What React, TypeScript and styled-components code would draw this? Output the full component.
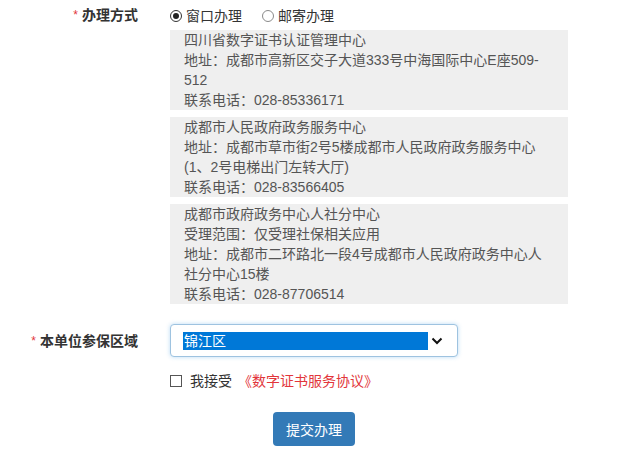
import React from "react";
import styled, { createGlobalStyle } from "styled-components";

const GlobalStyle = createGlobalStyle`
  html, body { margin: 0; padding: 0; background: #ffffff; }
  body {
    font-family: "Liberation Sans", "Noto Sans CJK SC", sans-serif;
    font-size: 14px;
    color: #333;
  }
`;

const Page = styled.div`
  width: 631px;
  height: 470px;
  padding-top: 5px;
  box-sizing: border-box;
  display: flex;
  flex-direction: column;
`;

const FormRow = styled.div<{ $mt?: number; $center?: boolean }>`
  display: grid;
  grid-template-columns: 138px 400px;
  column-gap: 32px;
  align-items: ${(p) => (p.$center ? "center" : "start")};
  margin-top: ${(p) => p.$mt ?? 0}px;
`;

const Label = styled.div`
  text-align: right;
  font-weight: bold;
  font-size: 14px;
  line-height: 20px;
  color: #333;
  white-space: nowrap;
`;

const Star = styled.span`
  color: #e2363b;
  font-weight: normal;
  font-size: 12px;
  margin-right: 4px;
  vertical-align: 1px;
`;

const Field = styled.div`
  display: flex;
  flex-direction: column;
`;

const RadioGroup = styled.div`
  display: flex;
  align-items: center;
  height: 22px;
  gap: 20px;
`;

const RadioLabel = styled.label`
  display: flex;
  align-items: center;
  gap: 3px;
  font-size: 14px;
  color: #333;
  line-height: 20px;
`;

const RadioCircle = styled.span<{ $checked?: boolean }>`
  width: 12px;
  height: 12px;
  box-sizing: border-box;
  border-radius: 50%;
  border: 1px solid ${(p) => (p.$checked ? "#333" : "#8a8a8a")};
  display: inline-flex;
  align-items: center;
  justify-content: center;
  margin-right: 1px;
  &::after {
    content: "";
    width: 6px;
    height: 6px;
    border-radius: 50%;
    background: ${(p) => (p.$checked ? "#222" : "transparent")};
  }
`;

const Offices = styled.div`
  display: flex;
  flex-direction: column;
  gap: 7px;
  margin-top: 3px;
  width: 398px;
`;

const OfficeCard = styled.div`
  background: #efefef;
  padding: 0 14px;
  color: #555;
  font-size: 14px;
  line-height: 20px;
`;

const Line = styled.div`
  white-space: nowrap;
`;

const SelectBox = styled.div`
  width: 288px;
  height: 33px;
  box-sizing: border-box;
  border: 1px solid #9ec3e0;
  border-radius: 4px;
  box-shadow: 0 0 4px rgba(102, 175, 233, 0.45);
  display: flex;
  align-items: center;
  padding: 0 14px 0 12px;
  background: #fff;
`;

const SelectedValue = styled.span`
  flex: 0 0 244px;
  height: 18px;
  line-height: 18px;
  background: #0078d7;
  color: #fff;
  font-size: 14px;
  padding-left: 1px;
`;

const Chevron = styled.svg`
  margin-left: auto;
  display: block;
`;

const AgreeRow = styled.div`
  display: flex;
  align-items: center;
  margin-top: 14px;
  margin-left: 170px;
  font-size: 14px;
  line-height: 20px;
  color: #333;
`;

const CheckBox = styled.span`
  width: 12px;
  height: 12px;
  box-sizing: border-box;
  border: 1px solid #555;
  margin-right: 8px;
  background: #fff;
`;

const AgreementLink = styled.a`
  color: #e2363b;
  text-decoration: none;
  margin-left: 6px;
`;

const ButtonWrap = styled.div`
  margin-left: 170px;
  width: 288px;
  display: flex;
  justify-content: center;
  margin-top: 21px;
`;

const SubmitButton = styled.button`
  width: 82px;
  height: 34px;
  border: none;
  border-radius: 4px;
  background: #337ab7;
  color: #fff;
  font-family: inherit;
  font-size: 14px;
  cursor: pointer;
`;

const offices: string[][] = [
  [
    "四川省数字证书认证管理中心",
    "地址：成都市高新区交子大道333号中海国际中心E座509-",
    "512",
    "联系电话：028-85336171",
  ],
  [
    "成都市人民政府政务服务中心",
    "地址：成都市草市街2号5楼成都市人民政府政务服务中心",
    "(1、2号电梯出门左转大厅)",
    "联系电话：028-83566405",
  ],
  [
    "成都市政府政务中心人社分中心",
    "受理范围：仅受理社保相关应用",
    "地址：成都市二环路北一段4号成都市人民政府政务中心人",
    "社分中心15楼",
    "联系电话：028-87706514",
  ],
];

export default function App() {
  return (
    <>
      <GlobalStyle />
      <Page>
        <FormRow>
          <Label>
            <Star>*</Star>办理方式
          </Label>
          <Field>
            <RadioGroup>
              <RadioLabel>
                <RadioCircle $checked />
                窗口办理
              </RadioLabel>
              <RadioLabel>
                <RadioCircle />
                邮寄办理
              </RadioLabel>
            </RadioGroup>
            <Offices>
              {offices.map((o, i) => (
                <OfficeCard key={i}>
                  {o.map((l, j) => (
                    <Line key={j}>{l}</Line>
                  ))}
                </OfficeCard>
              ))}
            </Offices>
          </Field>
        </FormRow>

        <FormRow $mt={20} $center>
          <Label>
            <Star>*</Star>本单位参保区域
          </Label>
          <SelectBox>
            <SelectedValue>锦江区</SelectedValue>
            <Chevron width="12" height="8" viewBox="0 0 12 8">
              <path d="M1.5 1.5 L6 6 L10.5 1.5" fill="none" stroke="#111" strokeWidth="2" />
            </Chevron>
          </SelectBox>
        </FormRow>

        <AgreeRow>
          <CheckBox />
          我接受
          <AgreementLink href="#">《数字证书服务协议》</AgreementLink>
        </AgreeRow>

        <ButtonWrap>
          <SubmitButton>提交办理</SubmitButton>
        </ButtonWrap>
      </Page>
    </>
  );
}
